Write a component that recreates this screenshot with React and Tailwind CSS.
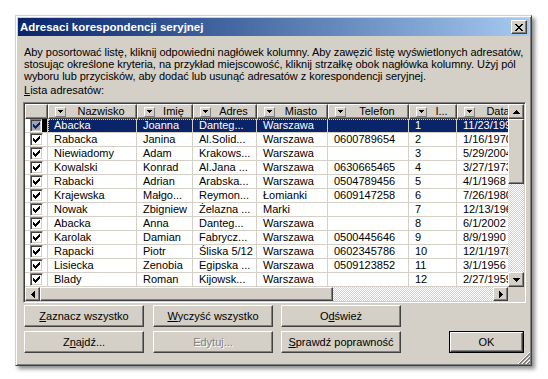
import React from 'react';

const raised =
  "bg-[#d4d0c8] border border-t-white border-l-white border-r-[#404040] border-b-[#404040] shadow-[inset_-1px_-1px_0_#808080]";

function Pix({ map, color = '#000', className = '' }) {
  const h = map.length;
  const w = map[0].length;
  const rects = [];
  map.forEach((r, y) =>
    [...r].forEach((c, x) => {
      if (c === 'X') rects.push(<rect key={x + '-' + y} x={x} y={y} width="1" height="1" />);
    })
  );
  return (
    <svg width={w} height={h} viewBox={`0 0 ${w} ${h}`} fill={color} shapeRendering="crispEdges" className={className}>
      {rects}
    </svg>
  );
}

const CLOSE = ['XX....XX', '.XX..XX.', '..XXXX..', '...XX...', '..XXXX..', '.XX..XX.', 'XX....XX'];
const CHECK = ['......X', '.....XX', 'X...XXX', 'XX.XXX.', 'XXXXX..', '.XXX...', '..X....'];
const UP = ['...X...', '..XXX..', '.XXXXX.', 'XXXXXXX'];
const DOWN = ['XXXXXXX', '.XXXXX.', '..XXX..', '...X...'];
const LEFT = ['...X', '..XX', '.XXX', 'XXXX', '.XXX', '..XX', '...X'];
const RIGHT = ['X...', 'XX..', 'XXX.', 'XXXX', 'XXX.', 'XX..', 'X...'];
const DD = ['XXXXX', '.XXX.', '..X..'];

const cols = [
  { w: 'w-[89px]', label: 'Nazwisko' },
  { w: 'w-[56px]', label: 'Imię' },
  { w: 'w-[64px]', label: 'Adres' },
  { w: 'w-[71px]', label: 'Miasto' },
  { w: 'w-[81px]', label: 'Telefon' },
  { w: 'w-[48px]', label: 'I...' },
  { w: 'w-[65px]', label: 'Data' },
];

const rows = [
  ['Abacka', 'Joanna', 'Danteg...', 'Warszawa', '', '1', '11/23/1990'],
  ['Rabacka', 'Janina', 'Al.Solid...', 'Warszawa', '0600789654', '2', '1/16/1970'],
  ['Niewiadomy', 'Adam', 'Krakows...', 'Warszawa', '', '3', '5/29/2004'],
  ['Kowalski', 'Konrad', 'Al.Jana ...', 'Warszawa', '0630665465', '4', '3/27/1973'],
  ['Rabacki', 'Adrian', 'Arabska...', 'Warszawa', '0504789456', '5', '4/1/1968'],
  ['Krajewska', 'Małgo...', 'Reymon...', 'Łomianki', '0609147258', '6', '7/26/1980'],
  ['Nowak', 'Zbigniew', 'Żelazna ...', 'Marki', '', '7', '12/13/1960'],
  ['Abacka', 'Anna', 'Danteg...', 'Warszawa', '', '8', '6/1/2002'],
  ['Karolak', 'Damian', 'Fabrycz...', 'Warszawa', '0500445646', '9', '8/9/1990'],
  ['Rapacki', 'Piotr', 'Śliska 5/12', 'Warszawa', '0602345786', '10', '12/1/1978'],
  ['Lisiecka', 'Zenobia', 'Egipska ...', 'Warszawa', '0509123852', '11', '3/1/1956'],
  ['Blady', 'Roman', 'Kijowsk...', 'Warszawa', '', '12', '2/27/1959'],
];

function Checkbox({ sel }) {
  return (
    <div
      className={`w-[13px] h-[13px] border border-t-[#808080] border-l-[#808080] border-r-white border-b-white shadow-[inset_1px_1px_0_#404040,inset_-1px_-1px_0_#d4d0c8] flex items-center justify-center ${
        sel ? 'bg-[#9ca3bf]' : 'bg-white'
      }`}
    >
      <Pix map={CHECK} color={sel ? '#0a246a' : '#000'} />
    </div>
  );
}

function HeaderCell({ w, label }) {
  return (
    <div className={`${raised} ${w} h-full shrink-0 flex items-center`}>
      <div className="ml-[6px] w-[11px] h-[10px] shrink-0 bg-[#d4d0c8] border border-t-white border-l-white border-r-[#808080] border-b-[#808080] flex items-center justify-center">
        <Pix map={DD} />
      </div>
      <div className="flex-1 text-center whitespace-nowrap overflow-hidden leading-[13px]">{label}</div>
    </div>
  );
}

function Grip() {
  const rects = [];
  for (let y = 0; y < 12; y++)
    for (let x = 0; x < 12; x++) {
      const s = x + y;
      let c = null;
      if (s === 11 || s === 15 || s === 19) c = '#ffffff';
      if (s === 12 || s === 13 || s === 16 || s === 17 || s === 20 || s === 21) c = '#808080';
      if (c) rects.push(<rect key={x + '-' + y} x={x} y={y} width="1" height="1" fill={c} />);
    }
  return (
    <svg width="12" height="12" viewBox="0 0 12 12" shapeRendering="crispEdges" className="absolute right-[1px] bottom-[1px]">
      {rects}
    </svg>
  );
}

function Btn({ children, className = '' }) {
  return (
    <div className={`${raised} w-[120px] h-[22px] flex items-center justify-center whitespace-nowrap ${className}`}>
      {children}
    </div>
  );
}

const track =
  'bg-[conic-gradient(#d4d0c8_25%,#ffffff_0_50%,#d4d0c8_0_75%,#ffffff_0)] bg-[length:2px_2px]';

export default function App() {
  return (
    <div className="w-[548px] h-[379px] bg-white pt-[15px] pl-[15px] font-['Liberation_Sans',Arial,sans-serif] text-[11px] text-black overflow-hidden">
      <div className="relative w-[517px] h-[351px] bg-[#d4d0c8] border border-t-[#d4d0c8] border-l-[#d4d0c8] border-r-[#404040] border-b-[#404040] shadow-[inset_1px_1px_0_#ffffff,inset_-1px_-1px_0_#808080,3px_3px_4px_rgba(0,0,0,0.45)] p-[2px] flex flex-col">
        {/* Title bar */}
        <div className="h-[18px] shrink-0 bg-linear-to-r from-[#0a246a] to-[#a6caf0] flex items-center pl-[2px] pr-[2px]">
          <span className="text-white font-bold text-[11.5px] leading-[13px] whitespace-nowrap">
            Adresaci korespondencji seryjnej
          </span>
          <div className={`${raised} ml-auto w-[16px] h-[14px] flex items-center justify-center`}>
            <Pix map={CLOSE} />
          </div>
        </div>

        {/* Description */}
        <div className="pl-[6px] mt-[10px] leading-[12px] whitespace-nowrap tracking-[-0.05px]">
          <div>Aby posortować listę, kliknij odpowiedni nagłówek kolumny. Aby zawęzić listę wyświetlonych adresatów,</div>
          <div>stosując określone kryteria, na przykład miejscowość, kliknij strzałkę obok nagłówka kolumny. Użyj pól</div>
          <div>wyboru lub przycisków, aby dodać lub usunąć adresatów z korespondencji seryjnej.</div>
        </div>
        <div className="pl-[6px] mt-[2px] leading-[12px]">
          <span className="underline">L</span>ista adresatów:
        </div>

        {/* Table */}
        <div className="ml-[5px] mt-[6px] w-[503px] h-[201px] shrink-0 bg-white border border-t-[#808080] border-l-[#808080] border-r-white border-b-white shadow-[inset_1px_1px_0_#404040,inset_-1px_-1px_0_#d4d0c8] p-[1px] flex flex-col">
          <div className="h-[183px] flex">
            <div className="w-[483px] overflow-hidden flex flex-col">
              <div className="h-[15px] flex shrink-0">
                <div className={`${raised} w-[23px] h-full shrink-0`} />
                {cols.map((c) => (
                  <HeaderCell key={c.label} w={c.w} label={c.label} />
                ))}
              </div>
              {rows.map((r, i) => {
                const sel = i === 0;
                return (
                  <div key={i} className="h-[14px] flex shrink-0">
                    <div className="w-[23px] h-full shrink-0 flex items-center pl-[5px] border-b border-r border-[#d4d0c8]">
                      <Checkbox sel={sel} />
                      {sel && <div className="ml-auto w-[5px] h-full bg-black" />}
                    </div>
                    <div
                      className={`flex h-full ${
                        sel ? 'bg-[#0a246a] text-white outline-1 outline-dotted outline-[#d4d0c8] -outline-offset-1' : ''
                      }`}
                    >
                      {r.map((v, j) => (
                        <div
                          key={j}
                          className={`${cols[j].w} h-full shrink-0 border-b border-r border-[#d4d0c8] pl-[6px] leading-[13px] whitespace-nowrap overflow-hidden`}
                        >
                          {v}
                        </div>
                      ))}
                    </div>
                  </div>
                );
              })}
            </div>
            {/* vertical scrollbar */}
            <div className="w-[16px] h-full flex flex-col">
              <div className={`${raised} h-[15px] shrink-0 flex items-center justify-center`}>
                <Pix map={UP} />
              </div>
              <div className={`${raised} h-[65px] shrink-0`} />
              <div className={`${track} flex-1`} />
              <div className={`${raised} h-[15px] shrink-0 flex items-center justify-center`}>
                <Pix map={DOWN} />
              </div>
            </div>
          </div>
          {/* horizontal scrollbar */}
          <div className="h-[14px] flex shrink-0">
            <div className={`${raised} w-[15px] h-full shrink-0 flex items-center justify-center`}>
              <Pix map={LEFT} />
            </div>
            <div className={`${raised} w-[293px] h-full shrink-0`} />
            <div className={`${track} flex-1 h-full`} />
            <div className={`${raised} w-[15px] h-full shrink-0 flex items-center justify-center`}>
              <Pix map={RIGHT} />
            </div>
            <div className="w-[16px] h-full shrink-0 bg-[#d4d0c8]" />
          </div>
        </div>

        {/* Buttons */}
        <div className="mt-[2px] ml-[6px] mr-[5px] flex items-end">
          <div className="flex flex-col gap-[4px]">
            <div className="flex">
              <Btn>
                <span className="underline">Z</span>aznacz wszystko
              </Btn>
              <Btn className="ml-[9px]">
                <span className="underline">W</span>yczyść wszystko
              </Btn>
              <Btn className="ml-[8px]">
                O<span className="underline">d</span>śwież
              </Btn>
            </div>
            <div className="flex">
              <Btn>
                Z<span className="underline">n</span>ajdź...
              </Btn>
              <Btn className="ml-[9px] text-[#808080] [text-shadow:1px_1px_0_#ffffff]">Edytuj...</Btn>
              <Btn className="ml-[8px]">
                <span className="underline">S</span>prawdź poprawność
              </Btn>
            </div>
          </div>
          <div className="ml-auto w-[75px] h-[22px] border border-black flex">
            <div className={`${raised} flex-1 flex items-center justify-center`}>OK</div>
          </div>
        </div>
        <Grip />
      </div>
    </div>
  );
}
